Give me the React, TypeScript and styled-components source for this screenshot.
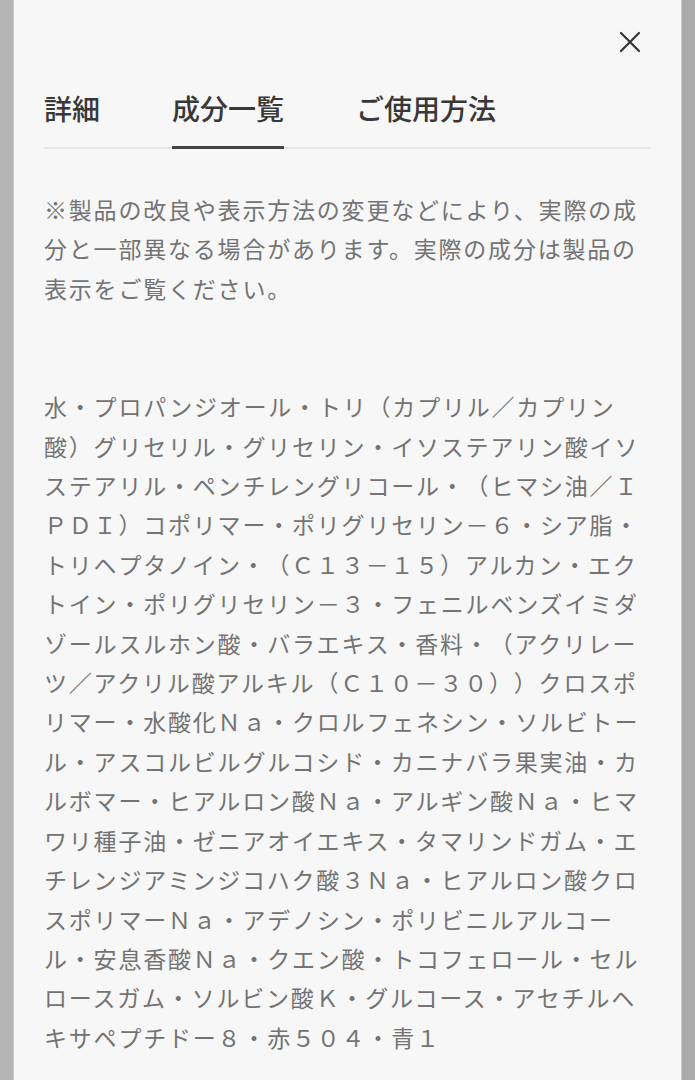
import React, { useState } from "react";
import styled, { createGlobalStyle } from "styled-components";

const GlobalStyle = createGlobalStyle`
  html, body {
    margin: 0;
    padding: 0;
    background: #b3b3b3;
  }
  body {
    font-family: "Noto Sans CJK JP", "Noto Sans", sans-serif;
    text-spacing-trim: space-all;
  }
`;

const Screen = styled.div`
  display: flex;
  min-height: 1080px;
  width: 695px;
  overflow: hidden;
`;

const Side = styled.div<{ $right?: boolean }>`
  flex: 0 0 14px;
  background: ${(p) => (p.$right ? "#aaaaaa" : "#b4b4b4")};
  border-${(p) => (p.$right ? "left" : "right")}: 1px solid #c9c9c9;
  box-sizing: border-box;
`;

const Panel = styled.div`
  flex: 1;
  background: #f7f7f7;
  padding: 0 30px;
  display: flex;
  flex-direction: column;
`;

const TopBar = styled.div`
  display: flex;
  justify-content: flex-end;
  padding-top: 30px;
  height: 24px;
`;

const CloseButton = styled.button`
  border: none;
  background: none;
  padding: 0;
  margin-right: 9px;
  width: 24px;
  height: 24px;
  display: flex;
  align-items: center;
  justify-content: center;
  cursor: pointer;
  color: #333;
`;

const Tabs = styled.div`
  display: flex;
  gap: 72px;
  margin-top: 34px;
  border-bottom: 2px solid #e6e6e6;
`;

const Tab = styled.button<{ $active?: boolean }>`
  border: none;
  background: none;
  padding: 0 0 18px;
  margin-bottom: -2px;
  font-family: inherit;
  font-size: 28px;
  line-height: 40px;
  font-weight: 500;
  color: #383838;
  border-bottom: 3px solid ${(p) => (p.$active ? "#444" : "transparent")};
  cursor: pointer;
`;

const Body = styled.div`
  color: #737373;
  font-size: 23px;
  letter-spacing: 1.8px;
  line-height: 39.4px;
  text-spacing-trim: space-all;
`;

const Notice = styled(Body)`
  margin-top: 41px;
`;

const Ingredients = styled(Body)`
  margin-top: 79px;
`;

const Line = styled.div`
  white-space: nowrap;
`;

const notice = [
  "※製品の改良や表示方法の変更などにより、実際の成",
  "分と一部異なる場合があります。実際の成分は製品の",
  "表示をご覧ください。",
];

const ingredients = [
  "水・プロパンジオール・トリ（カプリル／カプリン",
  "酸）グリセリル・グリセリン・イソステアリン酸イソ",
  "ステアリル・ペンチレングリコール・（ヒマシ油／Ｉ",
  "ＰＤＩ）コポリマー・ポリグリセリン－６・シア脂・",
  "トリヘプタノイン・（Ｃ１３－１５）アルカン・エク",
  "トイン・ポリグリセリン－３・フェニルベンズイミダ",
  "ゾールスルホン酸・バラエキス・香料・（アクリレー",
  "ツ／アクリル酸アルキル（Ｃ１０－３０））クロスポ",
  "リマー・水酸化Ｎａ・クロルフェネシン・ソルビトー",
  "ル・アスコルビルグルコシド・カニナバラ果実油・カ",
  "ルボマー・ヒアルロン酸Ｎａ・アルギン酸Ｎａ・ヒマ",
  "ワリ種子油・ゼニアオイエキス・タマリンドガム・エ",
  "チレンジアミンジコハク酸３Ｎａ・ヒアルロン酸クロ",
  "スポリマーＮａ・アデノシン・ポリビニルアルコー",
  "ル・安息香酸Ｎａ・クエン酸・トコフェロール・セル",
  "ロースガム・ソルビン酸Ｋ・グルコース・アセチルヘ",
  "キサペプチドー８・赤５０４・青１",
];

const tabs = ["詳細", "成分一覧", "ご使用方法"];

export default function App() {
  const [active, setActive] = useState(1);
  return (
    <>
      <GlobalStyle />
      <Screen>
        <Side />
        <Panel>
          <TopBar>
            <CloseButton aria-label="閉じる">
              <svg width="22" height="22" viewBox="0 0 22 22" fill="none">
                <path d="M2 2L20 20M20 2L2 20" stroke="currentColor" strokeWidth="2.2" strokeLinecap="round" />
              </svg>
            </CloseButton>
          </TopBar>
          <Tabs>
            {tabs.map((t, i) => (
              <Tab key={t} $active={i === active} onClick={() => setActive(i)}>
                {t}
              </Tab>
            ))}
          </Tabs>
          <Notice>
            {notice.map((l) => (
              <Line key={l}>{l}</Line>
            ))}
          </Notice>
          <Ingredients>
            {ingredients.map((l) => (
              <Line key={l}>{l}</Line>
            ))}
          </Ingredients>
        </Panel>
        <Side $right />
      </Screen>
    </>
  );
}
